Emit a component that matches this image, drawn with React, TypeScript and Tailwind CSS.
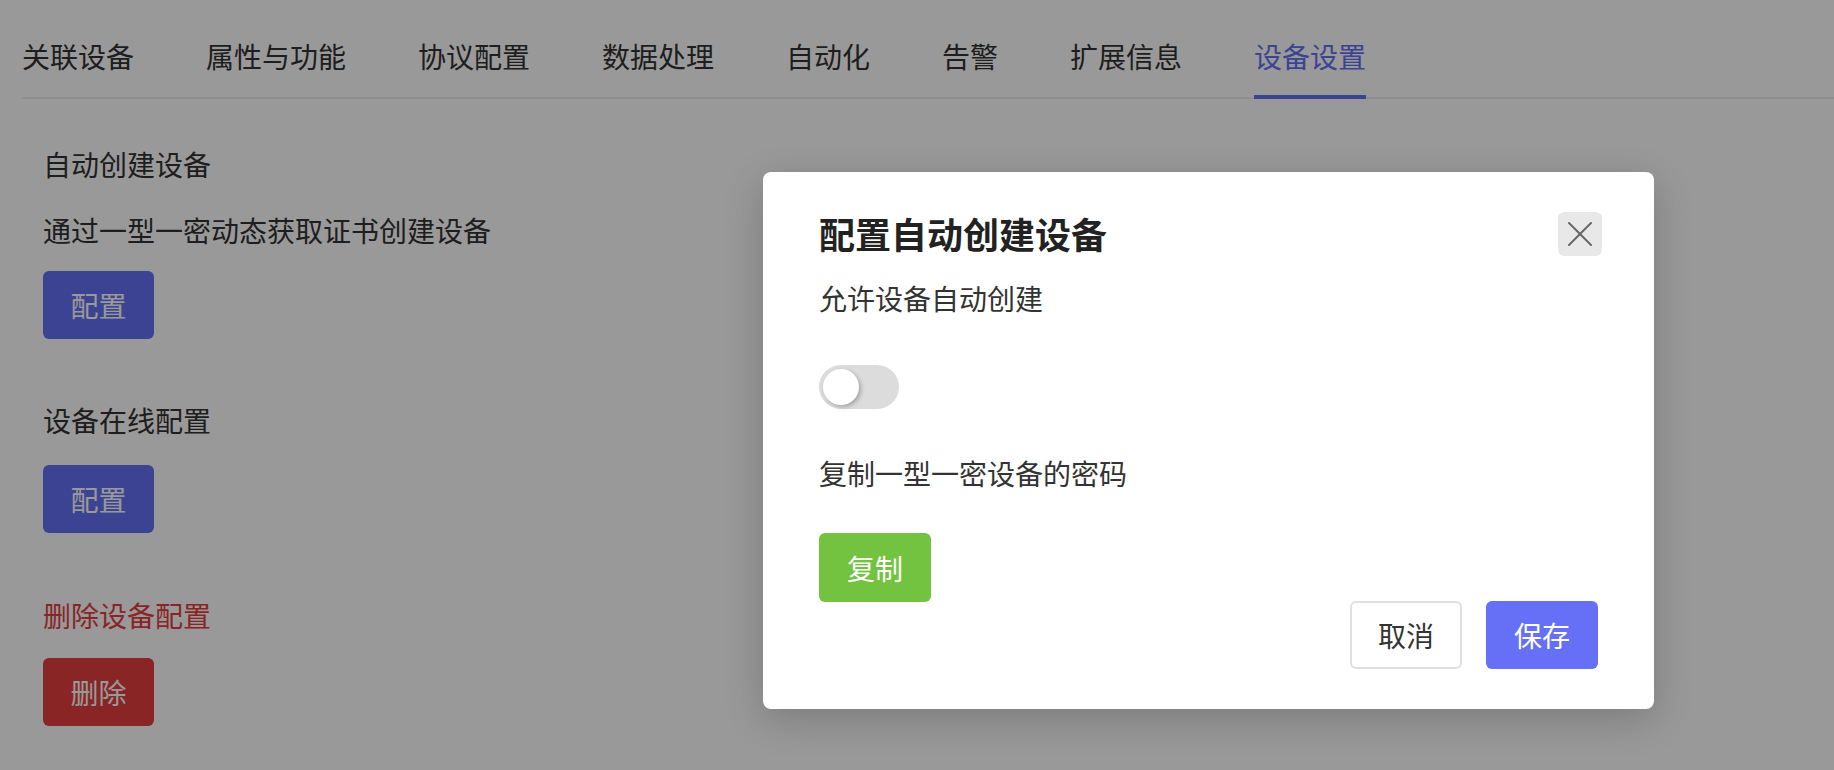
import { useState } from "react"

const tabs = ["关联设备", "属性与功能", "协议配置", "数据处理", "自动化", "告警", "扩展信息", "设备设置"]

function Toggle(props: { on: boolean; onChange: (v: boolean) => void }) {
  return (
    <button
      onClick={() => props.onChange(!props.on)}
      className={
        props.on
          ? "relative w-[80px] h-[44px] rounded-full bg-[#6570f6] shrink-0"
          : "relative w-[80px] h-[44px] rounded-full bg-[#dcdcdc] shrink-0"
      }
    >
      <span
        className={
          props.on
            ? "absolute top-[4px] left-[40px] w-[36px] h-[36px] rounded-full bg-white shadow-[2px_2px_4px_rgba(0,0,0,0.25)]"
            : "absolute top-[4px] left-[4px] w-[36px] h-[36px] rounded-full bg-white shadow-[2px_2px_4px_rgba(0,0,0,0.25)]"
        }
      />
    </button>
  )
}

export default function App() {
  const [autoCreate, setAutoCreate] = useState(false)

  return (
    <div className="relative w-[1834px] h-[770px] overflow-hidden bg-white font-['Noto_Sans_CJK_SC','Noto_Sans',sans-serif] text-[#333]">
      {/* tabs */}
      <div className="pl-[22px]">
        <div className="flex gap-[72px] border-b-2 border-[#eeeeee] h-[99px]">
          {tabs.map((t, i) => (
            <div
              key={i}
              className={
                i === tabs.length - 1
                  ? "pt-[38px] h-[99px] -mb-[2px] border-b-4 border-[#6570f6] text-[#6570f6] text-[28px] leading-[36px]"
                  : "pt-[38px] h-[99px] -mb-[2px] text-[#333] text-[28px] leading-[36px]"
              }
            >
              {t}
            </div>
          ))}
        </div>
      </div>

      {/* settings content */}
      <div className="pl-[43px] flex flex-col items-start">
        <div className="mt-[45px] text-[28px] leading-[40px]">自动创建设备</div>
        <div className="mt-[26px] text-[28px] leading-[40px]">通过一型一密动态获取证书创建设备</div>
        <button className="mt-[21px] w-[111px] h-[68px] rounded-md bg-[#6570f6] text-white text-[28px]">配置</button>

        <div className="mt-[61px] text-[28px] leading-[40px]">设备在线配置</div>
        <button className="mt-[25px] w-[111px] h-[68px] rounded-md bg-[#6570f6] text-white text-[28px]">配置</button>

        <div className="mt-[62px] text-[28px] leading-[40px] text-[#e53e3e]">删除设备配置</div>
        <button className="mt-[23px] w-[111px] h-[68px] rounded-md bg-[#e53e3e] text-white text-[28px]">删除</button>
      </div>

      {/* overlay */}
      <div className="absolute inset-0 bg-black/40" />

      {/* dialog */}
      <div className="absolute left-[763px] top-[172px] w-[891px] h-[537px] bg-white rounded-lg shadow-[0_10px_40px_rgba(0,0,0,0.2)] px-[56px] pt-[40px] pb-[39px] flex flex-col">
        <div className="flex items-center justify-between h-[44px]">
          <h2 className="-mt-[3px] text-[36px] leading-[44px] font-bold text-[#222]">配置自动创建设备</h2>
          <button className="-mr-[4px] w-[44px] h-[44px] rounded-md bg-[#e8e8e8] flex items-center justify-center">
            <svg width="24" height="24" viewBox="0 0 24 24" fill="none" stroke="#666" strokeWidth="2" strokeLinecap="round">
              <line x1="1" y1="1" x2="23" y2="23" />
              <line x1="23" y1="1" x2="1" y2="23" />
            </svg>
          </button>
        </div>

        <div className="mt-[22px] text-[28px] leading-[40px]">允许设备自动创建</div>
        <div className="mt-[47px] flex">
          <Toggle on={autoCreate} onChange={setAutoCreate} />
        </div>

        <div className="mt-[44px] text-[28px] leading-[40px]">复制一型一密设备的密码</div>
        <div className="mt-[40px] flex">
          <button className="w-[112px] h-[69px] rounded-md bg-[#73c340] text-white text-[28px]">复制</button>
        </div>

        <div className="-mt-[1px] flex justify-end gap-[24px]">
          <button className="w-[112px] h-[68px] rounded-md border-2 border-[#e0e0e0] bg-white text-[#333] text-[28px]">取消</button>
          <button className="w-[112px] h-[68px] rounded-md bg-[#6570f6] text-white text-[28px]">保存</button>
        </div>
      </div>
    </div>
  )
}
